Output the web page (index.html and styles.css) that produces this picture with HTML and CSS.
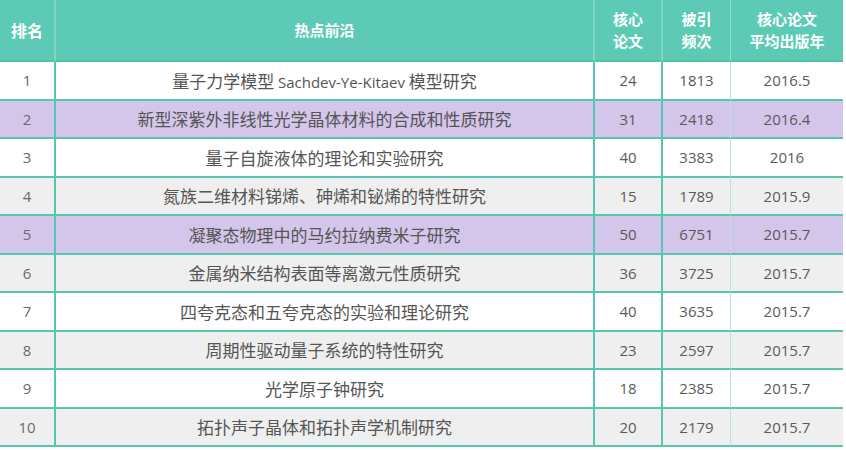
FILE: index.html
```html
<!DOCTYPE html>
<html lang="zh">
<head>
<meta charset="utf-8">
<link rel="stylesheet" href="styles.css">
</head>
<body>
<table class="rank-table">
  <colgroup>
    <col class="c-rank"><col class="c-topic"><col class="c-num"><col class="c-num2"><col class="c-year">
  </colgroup>
  <thead>
    <tr>
      <th class="rank">排名</th>
      <th class="topic">热点前沿</th>
      <th class="num">核心<br>论文</th>
      <th class="num2">被引<br>频次</th>
      <th class="year">核心论文<br>平均出版年</th>
    </tr>
  </thead>
  <tbody>
    <tr class="white"><td class="rank">1</td><td class="topic">量子力学模型 <span class="lat">Sachdev-Ye-Kitaev</span> 模型研究</td><td class="num">24</td><td class="num2">1813</td><td class="year">2016.5</td></tr>
    <tr class="purple"><td class="rank">2</td><td class="topic">新型深紫外非线性光学晶体材料的合成和性质研究</td><td class="num">31</td><td class="num2">2418</td><td class="year">2016.4</td></tr>
    <tr class="white"><td class="rank">3</td><td class="topic">量子自旋液体的理论和实验研究</td><td class="num">40</td><td class="num2">3383</td><td class="year">2016</td></tr>
    <tr class="gray"><td class="rank">4</td><td class="topic">氮族二维材料锑烯、砷烯和铋烯的特性研究</td><td class="num">15</td><td class="num2">1789</td><td class="year">2015.9</td></tr>
    <tr class="purple"><td class="rank">5</td><td class="topic">凝聚态物理中的马约拉纳费米子研究</td><td class="num">50</td><td class="num2">6751</td><td class="year">2015.7</td></tr>
    <tr class="gray"><td class="rank">6</td><td class="topic">金属纳米结构表面等离激元性质研究</td><td class="num">36</td><td class="num2">3725</td><td class="year">2015.7</td></tr>
    <tr class="white"><td class="rank">7</td><td class="topic">四夸克态和五夸克态的实验和理论研究</td><td class="num">40</td><td class="num2">3635</td><td class="year">2015.7</td></tr>
    <tr class="gray"><td class="rank">8</td><td class="topic">周期性驱动量子系统的特性研究</td><td class="num">23</td><td class="num2">2597</td><td class="year">2015.7</td></tr>
    <tr class="white"><td class="rank">9</td><td class="topic">光学原子钟研究</td><td class="num">18</td><td class="num2">2385</td><td class="year">2015.7</td></tr>
    <tr class="gray"><td class="rank">10</td><td class="topic">拓扑声子晶体和拓扑声学机制研究</td><td class="num">20</td><td class="num2">2179</td><td class="year">2015.7</td></tr>
  </tbody>
</table>
</body>
</html>
```

FILE: styles.css
```css
html, body {
  margin: 0;
  padding: 0;
  background: #ffffff;
}

.rank-table {
  border-collapse: separate;
  border-spacing: 0;
  table-layout: fixed;
  width: 843px;
  font-family: "Open Sans", "Noto Sans CJK SC", sans-serif;
  color: #5a5a5a;
}

.c-rank { width: 56px; }
.c-topic { width: 539px; }
.c-num { width: 68px; }
.c-num2 { width: 68px; }
.c-year { width: 112px; }

.rank-table th,
.rank-table td {
  padding: 0;
  text-align: center;
  vertical-align: middle;
  border-bottom: 2px solid #55c6b0;
  border-right: 2px solid #55c6b0;
}

.rank-table th.year,
.rank-table td.year {
  border-right: none;
}

.rank-table td.num2 {
  border-right: 1px solid #b6e6db;
}

.rank-table th {
  height: 60px;
  background: #5ccab5;
  color: #ffffff;
  font-family: "Noto Sans CJK SC", sans-serif;
  font-weight: 700;
  font-size: 15px;
  line-height: 22px;
  border-right-color: #7ed6c5;
  border-bottom-color: #4fc3ac;
}

.rank-table th.num2 {
  border-right: 1px solid #8edbcb;
}

.rank-table th.rank {
  font-size: 16px;
}

.rank-table td {
  height: 36.5px;
  font-size: 15px;
}

.rank-table td.topic {
  font-family: "Noto Sans CJK SC", sans-serif;
  font-size: 17px;
  color: #555555;
}

.rank-table td .lat {
  font-family: "Open Sans", sans-serif;
  font-size: 15px;
}

.rank-table td.rank {
  color: #6a6a6a;
}

tr.white td { background: #ffffff; }
tr.purple td { background: #d4c5ea; }
tr.gray td { background: #efefef; }
```
